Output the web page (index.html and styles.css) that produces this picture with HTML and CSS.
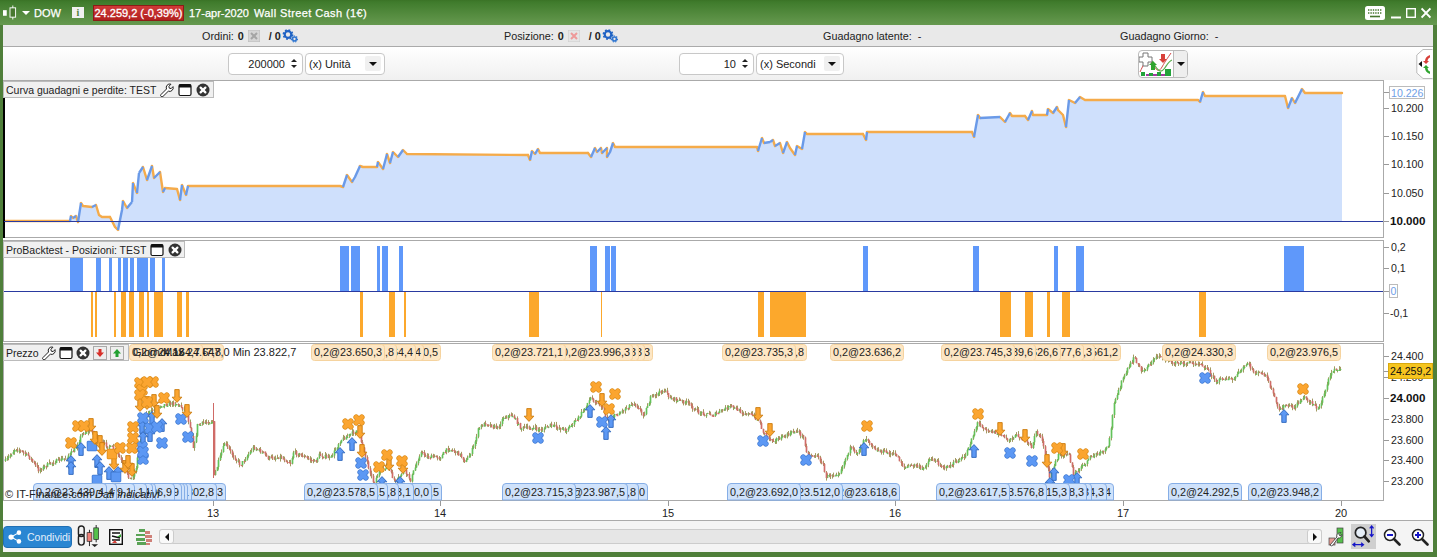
FILE: index.html
```html
<!DOCTYPE html>
<html lang="it">
<head>
<meta charset="utf-8">
<title>DOW - Wall Street Cash</title>
<link rel="stylesheet" href="styles.css">
</head>
<body>
<svg class="defs" aria-hidden="true">
  <defs>
    <symbol id="i-wrench" viewBox="0 0 14 14"><path d="M1 11.500 6.500 6a3.600 3.600 0 0 1 .6-3.800A3.600 3.600 0 0 1 11 1.200L8.900 3.300l.4 1.900 1.900.4L13 3.600a3.600 3.600 0 0 1-1 3.900 3.600 3.600 0 0 1-3.700.7L3 13.400A1.300 1.300 0 0 1 1 11.500Z" fill="#fff" stroke="#222" stroke-width="1"/></symbol>
    <symbol id="i-window" viewBox="0 0 14 14"><rect x="1" y="1.500" width="12" height="11" rx="1.500" fill="#fff" stroke="#111" stroke-width="1.200"/><rect x="1" y="1.500" width="12" height="3" fill="#111"/></symbol>
    <symbol id="i-close" viewBox="0 0 14 14"><circle cx="7" cy="7" r="6.500" fill="#333"/><path d="M4.600 4.600l4.800 4.800M9.400 4.600 4.600 9.400" stroke="#fff" stroke-width="2.200" stroke-linecap="round"/></symbol>
    <symbol id="i-gears" viewBox="0 0 16 14"><circle cx="6" cy="5.500" r="3.300" fill="none" stroke="#1f63c4" stroke-width="2.200"/><circle cx="6" cy="5.500" r="4.600" fill="none" stroke="#1f63c4" stroke-width="1.600" stroke-dasharray="1.800 1.800"/><circle cx="12.500" cy="10" r="1.900" fill="none" stroke="#2f75d0" stroke-width="1.500"/><circle cx="12.500" cy="10" r="3" fill="none" stroke="#2f75d0" stroke-width="1.100" stroke-dasharray="1.300 1.300"/></symbol>
    <symbol id="m-ox" viewBox="0 0 12 12"><path d="M3.200 3.200l5.600 5.600M8.800 3.200 3.200 8.800" fill="none" stroke="#d98a18" stroke-width="5.600" stroke-linecap="round"/><path d="M3.200 3.200l5.600 5.600M8.800 3.200 3.200 8.800" fill="none" stroke="#fba530" stroke-width="4.400" stroke-linecap="round"/></symbol>
    <symbol id="m-bx" viewBox="0 0 12 12"><path d="M3.200 3.200l5.600 5.600M8.800 3.200 3.200 8.800" fill="none" stroke="#3f78cf" stroke-width="5.600" stroke-linecap="round"/><path d="M3.200 3.200l5.600 5.600M8.800 3.200 3.200 8.800" fill="none" stroke="#5c98f4" stroke-width="4.400" stroke-linecap="round"/></symbol>
    <symbol id="m-od" viewBox="0 0 11 14"><path d="M3.300.6h4.400v7.600h2.700L5.500 13.400.6 8.200h2.700Z" fill="#fba530" stroke="#c97c10" stroke-width=".9"/></symbol>
    <symbol id="m-bu" viewBox="0 0 11 14"><path d="M3.300 13.400h4.400V5.800h2.700L5.500.6.6 5.800h2.700Z" fill="#5c98f4" stroke="#2f66bb" stroke-width=".9"/></symbol>
    <symbol id="m-bs" viewBox="0 0 11 11"><rect x=".5" y=".5" width="10" height="10" rx="1.200" fill="#5c98f4" stroke="#3f78cf"/></symbol>
    <symbol id="m-os" viewBox="0 0 11 11"><rect x=".5" y=".5" width="10" height="10" rx="1.200" fill="#fba530" stroke="#de8a14"/></symbol>
  </defs>
</svg>

<div class="app">
  <header class="titlebar">
    <svg class="ti-candle" viewBox="0 0 15 15"><rect x="0" y="5" width="4" height="6" fill="#fff"/><path d="M10.500 0v15" stroke="#fff"/><rect x="7.500" y="2.500" width="6" height="10" fill="#47782f" stroke="#fff"/></svg>
    <span class="ti-caret"></span>
    <span class="ti-sym">DOW</span>
    <span class="ti-info">i</span>
    <span class="ti-price">24.259,2 (-0,39%)</span>
    <span class="ti-text">17-apr-2020</span>
    <span class="ti-text ti-wide">Wall Street Cash (1€)</span>
    <span class="ti-right">
      <svg class="ti-kbd" viewBox="0 0 20 14"><rect width="20" height="14" rx="2.500" fill="#fff"/><path d="M3 4h14M3 7h14" stroke="#47782f" stroke-width="1.600" stroke-dasharray="1.400 1"/><path d="M5 10.500h10" stroke="#47782f" stroke-width="1.600"/></svg>
      <svg class="ti-win" viewBox="0 0 10 12"><path d="M0 10.500h10" stroke="#fff" stroke-width="2"/></svg>
      <svg class="ti-win" viewBox="0 0 10 12"><rect x=".7" y="1.700" width="8.600" height="8.600" fill="none" stroke="#fff" stroke-width="1.400"/></svg>
      <svg class="ti-win" viewBox="0 0 10 12"><path d="M.6 1.500l8.800 9M9.400 1.500l-8.800 9" stroke="#fff" stroke-width="1.800"/></svg>
    </span>
  </header>

  <div class="status">
    <div class="st-cell">Ordini: <b>0</b>
      <svg class="st-doc" viewBox="0 0 12 12"><rect width="12" height="12" fill="#d5d5d5" stroke="#bbb"/><path d="M3 3l6 6M9 3 3 9" stroke="#a5a5a5" stroke-width="2"/></svg>
      <b class="st-slash">/ 0</b><svg class="st-gear"><use href="#i-gears"/></svg></div>
    <div class="st-cell">Posizione: <b>0</b>
      <svg class="st-doc" viewBox="0 0 12 12"><rect width="12" height="12" fill="#e5e5e5" stroke="#ccc"/><path d="M3 3l6 6M9 3 3 9" stroke="#ee9a9a" stroke-width="2"/></svg>
      <b class="st-slash">/ 0</b><svg class="st-gear"><use href="#i-gears"/></svg></div>
    <div class="st-cell">Guadagno latente:&nbsp; -</div>
    <div class="st-cell">Guadagno Giorno:&nbsp; -</div>
  </div>

  <div class="controls">
    <div class="ctl-group">
      <div class="spin"><span class="spin-val">200000</span><span class="spin-arrows"><i class="up"></i><i class="down"></i></span></div>
      <div class="sel sel-a"><span>(x) Unità</span><span class="sel-btn"><i></i></span></div>
    </div>
    <div class="ctl-group ctl-second">
      <div class="spin"><span class="spin-val">10</span><span class="spin-arrows"><i class="up"></i><i class="down"></i></span></div>
      <div class="sel sel-b"><span>(x) Secondi</span><span class="sel-btn"><i></i></span></div>
    </div>
    <div class="ind-btn">
      <svg class="ind-ico" viewBox="0 0 34 26">
        <path d="M1 21C6 10 9 6 13 12s6 11 10 4 5-8 9-14" fill="none" stroke="#d24a4a" stroke-width="1"/>
        <path d="M3 11c5-7 8-5 12 2s7 9 10 5 5-8 8-9" fill="none" stroke="#5cae4e" stroke-width="1.200"/>
        <path d="M4 2h5v4h4v5H9v4H4v-4H0V6h4Z" fill="#fff" stroke="#777"/>
        <path d="M12 19v-5H10l4-4 4 4h-2v5Z" fill="#2fa52f"/>
        <path d="M22 3v5h-2l4 4 4-4h-2V3Z" fill="#d8403a"/>
        <path d="M2 25v-4h4v4Zm8 0v-3h4v3Zm8 0v-4h4v4Zm8-7h6v7h-6Z" fill="#23a23a"/>
        <path d="M7 25v-2h3v2Zm7 0v-2h4v2Zm8 0v-2h4v2Z" fill="#a23aa2"/>
      </svg>
      <span class="ind-caret"><i></i></span>
    </div>
    <div class="side-tab">
      <svg viewBox="0 0 17 30"><path d="M16.500.5H7L.8 6v18L7 29.500h9.500" fill="#fff" stroke="#bbb"/><path d="M2.500 15 6 12v6Z" fill="#111"/><path d="M14 6c-3 1-5 3-5 6H7l3 3 3-3h-1.500c0-1.500 1-3 2.500-3.500Z" fill="#d8403a"/><path d="M14 25c-3-1-5-3-5-6H7l3-3 3 3h-1.500c0 1.500 1 3 2.500 3.500Z" fill="#2fa52f"/></svg>
    </div>
  </div>

  <section class="panel panel-pnl">
    <div class="plot"></div>
    <svg class="canvas" viewBox="3 80 1430 158">
      <g id="pnl-area"></g>
      <rect class="black-bar" x="3" y="98" width="2" height="140"/>
      <path class="zero" d="M4 221.500H1383"/>
      <path class="tick" d="M1384 92.500h5M1384 108.500h5M1384 136.500h5M1384 164.500h5M1384 193.500h5M1384 221.500h5"/>
      <text class="ax" x="1391" y="112">10.200</text>
      <text class="ax" x="1391" y="140">10.150</text>
      <text class="ax" x="1391" y="168">10.100</text>
      <text class="ax" x="1391" y="197">10.050</text>
      <text class="ax ax-b" x="1390" y="225">10.000</text>
      <rect class="ax-box" x="1389.500" y="86.500" width="35" height="12"/>
      <text class="ax ax-blue" x="1391" y="97">10.226</text>
    </svg>
    <div class="chip chip-pnl">Curva guadagni e perdite: TEST
      <svg class="chip-i"><use href="#i-wrench"/></svg><svg class="chip-i"><use href="#i-window"/></svg><svg class="chip-i"><use href="#i-close"/></svg></div>
  </section>

  <section class="panel panel-pos">
    <div class="plot"></div>
    <svg class="canvas" viewBox="3 240 1430 102">
      <g id="pos-bars"></g>
      <path class="zero" d="M4 291.500H1383"/>
      <path class="tick" d="M1384 247.500h5M1384 268.500h5M1384 291.500h5M1384 313.500h5"/>
      <text class="ax" x="1391" y="251">0,2</text>
      <text class="ax" x="1391" y="272">0,1</text>
      <rect class="ax-box" x="1389.500" y="284.500" width="8" height="13"/>
      <text class="ax ax-blue" x="1390.500" y="295">0</text>
      <text class="ax" x="1390" y="317">-0,1</text>
    </svg>
    <div class="chip chip-pos">ProBacktest - Posizioni: TEST
      <svg class="chip-i"><use href="#i-window"/></svg><svg class="chip-i"><use href="#i-close"/></svg></div>
  </section>

  <section class="panel panel-price">
    <div class="plot"></div>
    <svg class="canvas" viewBox="3 343 1430 158">
      <g id="price-candles"></g>
      <g id="price-marks"></g>
      <g id="price-bubbles"></g>
      <text class="ov" x="133" y="356">Giorno: 13</text>
      <text class="ov" x="163" y="356">Max 24.647,0 Min 23.822,7</text>
      <text class="ov" x="5" y="498">© IT-Finance.com</text>
      <text class="ov ov-i" x="95" y="498">Dati indicativi</text>
      <path class="tick" d="M1384 356.500h5M1384 377.500h5M1384 398.500h5M1384 419.500h5M1384 440.500h5M1384 460.500h5M1384 481.500h5M1384 371.500h5"/>
      <text class="ax" x="1391" y="360">24.400</text>
      <text class="ax" x="1391" y="381">24.200</text>
      <text class="ax ax-b" x="1390" y="402">24.000</text>
      <text class="ax" x="1391" y="423">23.800</text>
      <text class="ax" x="1391" y="444">23.600</text>
      <text class="ax" x="1391" y="464">23.400</text>
      <text class="ax" x="1391" y="485">23.200</text>
      <rect class="last-box" x="1388.500" y="363.500" width="44" height="15"/>
      <text class="ax last-t" x="1390" y="375">24.259,2</text>
    </svg>
    <div class="chip chip-price">Prezzo
      <svg class="chip-i"><use href="#i-wrench"/></svg><svg class="chip-i"><use href="#i-window"/></svg><svg class="chip-i"><use href="#i-close"/></svg>
      <svg class="chip-b" viewBox="0 0 14 14"><rect x=".5" y=".5" width="13" height="13" fill="#eee" stroke="#aaa"/><path d="M7 11 3 6.500h2.500V3h3v3.500H11Z" fill="#d8302a"/></svg>
      <svg class="chip-b" viewBox="0 0 14 14"><rect x=".5" y=".5" width="13" height="13" fill="#eee" stroke="#aaa"/><path d="M7 3l4 4.500H8.500V11h-3V7.500H3Z" fill="#22a032"/></svg>
    </div>
  </section>

  <div class="xaxis">
    <span class="x-tick x13">13</span><span class="x-tick x14">14</span><span class="x-tick x15">15</span><span class="x-tick x16">16</span><span class="x-tick x17">17</span><span class="x-tick x20">20</span>
  </div>

  <footer class="toolbar">
    <button class="share">
      <svg viewBox="0 0 16 16"><circle cx="3.500" cy="8" r="3" fill="#fff"/><circle cx="12.500" cy="3" r="2.600" fill="#fff"/><circle cx="12.500" cy="13" r="2.600" fill="#fff"/><path d="M3.500 8l9-5M3.500 8l9 5" stroke="#fff" stroke-width="1.300"/></svg>
      Condividi
    </button>
    <svg class="tb-link" viewBox="0 0 24 24">
      <rect x="1.500" y="1" width="6" height="11" rx="3" fill="none" stroke="#222" stroke-width="1.500"/><rect x="1.500" y="10" width="6" height="11" rx="3" fill="none" stroke="#222" stroke-width="1.500"/>
      <path d="M20 0v18" stroke="#222"/><rect x="17.500" y="3" width="5" height="12" fill="#56c04c" stroke="#222" stroke-width=".7"/>
      <path d="M13 5v17" stroke="#222"/><rect x="10.500" y="8" width="5" height="9" fill="#ee8078" stroke="#222" stroke-width=".7"/><path d="M15 20h7l-3.500 3Z" fill="#222"/>
    </svg>
    <svg class="tb-doc" viewBox="0 0 14 16"><rect x=".7" y=".7" width="12.600" height="14.600" fill="#fff" stroke="#111" stroke-width="1.400"/><path d="M3 4h8M3 7l8 2M3 11h8" stroke="#111" stroke-width="1.300"/><path d="M3 14l3-3 2 3Z" fill="#d8403a"/><path d="M8 8l4-3v3Z" fill="#2fa52f"/></svg>
    <svg class="tb-brick" viewBox="0 0 16 16"><path d="M0 5h9v2H0Zm0 4h9v3H0Zm1 4h9v3H1ZM3 0h6v3H3Z" fill="#5aa356"/><path d="M9 2h5v3H9Zm0 4h7v3H9Zm1 4h6v3h-6Zm0 4h4v2h-4Z" fill="#cf8078"/></svg>
    <div class="scroll">
      <span class="sc-btn"><i class="sc-l"></i></span>
      <span class="sc-track"></span>
      <span class="sc-btn"><i class="sc-r"></i></span>
    </div>
    <svg class="tb-wrench" viewBox="0 0 16 20"><rect x="1" y="11" width="6" height="7" fill="#e89a92" stroke="#444" stroke-width=".7"/><rect x="9" y="1" width="6" height="15" fill="#56c04c" stroke="#444" stroke-width=".7"/><path d="M2 18 9 10a3 3 0 0 1 2-4l2-.5-2 2 1 1.500 2-1.500a3.500 3.500 0 0 1-4 3.500L5 18a2 2 0 0 1-3 0Z" fill="#fff" stroke="#333" stroke-width=".8"/></svg>
    <span class="tb-zoom-on">
      <svg viewBox="0 0 24 24"><circle cx="9" cy="8" r="5.500" fill="#e6eef7" stroke="#222" stroke-width="1.800"/><path d="M13 12l4.500 5" stroke="#222" stroke-width="2.800" stroke-linecap="round"/><path d="M20.500 1v11M18.500 3.500l2-2.500 2 2.500M18.500 9.500l2 2.500 2-2.500M1 20.500h11M3.500 18.500 1 20.500l2.500 2M9.500 18.500l2.500 2-2.500 2" fill="none" stroke="#1616c8" stroke-width="1.300"/></svg>
    </span>
    <svg class="tb-zoom" viewBox="0 0 18 18"><circle cx="7" cy="7" r="5.500" fill="#fff" stroke="#222" stroke-width="1.500"/><path d="M4 7h6" stroke="#1616c8" stroke-width="2"/><path d="M11 11l5.500 5.500" stroke="#222" stroke-width="2.600" stroke-linecap="round"/></svg>
    <svg class="tb-zoom tb-zoom-plus" viewBox="0 0 18 18"><circle cx="7" cy="7" r="5.500" fill="#fff" stroke="#222" stroke-width="1.500"/><path d="M4 7h6M7 4v6" stroke="#1616c8" stroke-width="2"/><path d="M11 11l5.500 5.500" stroke="#222" stroke-width="2.600" stroke-linecap="round"/></svg>
  </footer>
</div>
<script src="chart.js"></script>
</body>
</html>
```
FILE: styles.css
```css
* { box-sizing: border-box; }
html, body { margin: 0; padding: 0; background: #fff; }
body { font: 11px "Liberation Sans", Arial, sans-serif; color: #222; overflow: hidden; }
.defs { position: absolute; width: 0; height: 0; }

.app { width: 1437px; height: 557px; display: flex; flex-direction: column; background: #fff;
  border-left: 3px solid #4f7f3a; border-right: 4px solid #4f7f3a; border-bottom: 5px solid #4f7f3a; }

/* title bar */
.titlebar { height: 25px; margin-left: -3px; margin-right: -4px; flex: none; display: flex; align-items: center; color: #fff;
  background: linear-gradient(#3a7326 0, #3f7b2c 2px, #66994f 100%); padding-left: 3px; }
.ti-candle { width: 14px; height: 15px; flex: none; }
.ti-caret { width: 0; height: 0; margin-left: 5px; border: 4px solid transparent; border-top: 4px solid #fff; border-bottom: 0; }
.ti-sym { margin-left: 4px; width: 38px; -webkit-text-stroke: .25px #fff; }
.ti-info { width: 12px; height: 11px; background: #f0f0f0; color: #4f7f3a; font: bold 10px/11px "Liberation Serif", serif; text-align: center; }
.ti-price { margin-left: 9px; width: 91px; height: 16px; line-height: 14px; text-align: center; white-space: nowrap;
  background: linear-gradient(#cf3a38, #b3201f); border: 1px solid #8c1d16; font-size: 11px; -webkit-text-stroke: .3px #fff; }
.ti-text { margin-left: 5px; -webkit-text-stroke: .25px #fff; white-space: nowrap; }
.ti-wide { letter-spacing: .4px; }
.ti-right { margin-left: auto; display: flex; align-items: center; gap: 5px; padding-right: 6px; }
.ti-kbd { width: 20px; height: 14px; margin-right: 1px; }
.ti-win { width: 10px; height: 12px; }

/* status row */
.status { height: 22px; flex: none; display: grid; grid-template-columns: 302px 319px 297px 1fr; padding-left: 199px; font-size: 10.8px;
  align-items: center; background: #e9e9e9; border-bottom: 1px solid #aaa; white-space: nowrap; }
.st-cell { display: flex; align-items: center; gap: 4px; white-space: nowrap; }
.st-doc { width: 12px; height: 12px; }
.st-slash { margin-left: 5px; margin-right: -1px; }
.st-gear { width: 16px; height: 14px; margin-left: -2px; }

/* controls row */
.controls { height: 33px; flex: none; display: flex; align-items: center; padding-left: 225px;
  background: linear-gradient(#fff, #f0f0f0); }
.ctl-group { display: flex; gap: 2px; height: 22px; }
.ctl-second { margin-left: 294px; }
.spin { width: 75px; display: flex; justify-content: flex-end; align-items: center; background: #fff; border: 1px solid #c8c8c8; border-radius: 4px; padding-right: 2px; }
.spin-val { margin-right: 3px; }
.spin-arrows { width: 12px; display: flex; flex-direction: column; align-items: center; gap: 3px; }
.spin-arrows i { width: 0; height: 0; border: 3px solid transparent; border-top: 0; border-bottom: 3px solid #222; }
.spin-arrows i.down { border-top: 3px solid #222; border-bottom: 0; }
.sel { display: flex; justify-content: space-between; align-items: center; background: #fff; border: 1px solid #c8c8c8; border-radius: 4px; padding: 0 3px 0 3px; }
.sel-a { width: 80px; }
.sel-b { width: 88px; }
.sel-btn { width: 16px; height: 15px; display: flex; align-items: center; justify-content: center; background: #f0f0f0; border-radius: 2px; }
.sel-btn i, .ind-caret i { width: 0; height: 0; border: 4px solid transparent; border-top: 4px solid #111; border-bottom: 0; }
.ind-btn { margin-left: 294px; width: 50px; height: 28px; display: flex; background: #fff; border: 1px solid #bbb; border-radius: 4px; }
.ind-ico { width: 34px; height: 26px; flex: none; }
.ind-caret { flex: 1; display: flex; align-items: center; justify-content: center; background: #eee; border-left: 1px solid #bbb; border-radius: 0 3px 3px 0; }
.side-tab { margin-left: auto; width: 17px; height: 30px; }
.side-tab svg { width: 17px; height: 30px; display: block; }

/* panels */
.panel { position: relative; flex: none; display: flex; }
.panel-pnl { height: 158px; margin-bottom: 2px; }
.panel-pos { height: 102px; margin-bottom: 1px; }
.panel-price { height: 158px; }
.plot { width: 1381px; border: 1px solid #aaa; background: #fff; }
.canvas { position: absolute; left: 0; top: 0; width: 100%; height: 100%; display: block; }
.chip { position: absolute; left: 0; top: 1px; height: 17px; display: flex; align-items: center; gap: 3px; padding-left: 2px; white-space: nowrap; font-size: 10.5px;
  background: #f0f0f0; border: 1px solid #bbb; }
.chip-pnl { width: 211px; gap: 4px; }
.chip-pos { width: 182px; gap: 4px; }
.chip-price { width: 126px; }
.chip-i { width: 14px; height: 14px; flex: none; }
.chip-b { width: 14px; height: 14px; flex: none; }

/* svg chart styling */
.ax { font: 10.6px "Liberation Sans", Arial, sans-serif; fill: #222; }
.ax-b { font-size: 11.600px; font-weight: bold; fill: #111; }
.ax-blue { fill: #6f9ee6; }
.ax-box { fill: #fff; stroke: #bbb; }
.last-box { fill: #f6c51f; stroke: #d9a90e; }
.last-t { fill: #111; }
.tick { stroke: #999; fill: none; }
.zero { stroke: #2a3aa0; stroke-width: 1; fill: none; }
.black-bar { fill: #000; }
.area { fill: #cfe0fc; }
.up { stroke: #6a9ae8; stroke-width: 2.400; fill: none; stroke-linejoin: round; }
.dn { stroke: #f5ab4a; stroke-width: 2.400; fill: none; stroke-linecap: round; }
.bar-b { fill: #5f98fa; }
.bar-o { fill: #fca82c; }
.c-wick { stroke: #a39a62; stroke-width: 1; fill: none; }
.c-up { stroke: #62c25a; stroke-width: 1.700; fill: none; }
.c-dn { stroke: #d06c68; stroke-width: 1.700; fill: none; }
.b-o { fill: #fde6c4; stroke: #f5d39f; }
.b-b { fill: #cfe2fb; stroke: #86aee6; }
.b-t { font: 10.800px "Liberation Sans", Arial, sans-serif; fill: #222; }
.ov { font: 11px "Liberation Sans", Arial, sans-serif; fill: #222; }
.ov-i { font-style: italic; }

/* x axis */
.xaxis { height: 20px; flex: none; position: relative; background: #fff; border-bottom: 1px solid #aaa; }
.x-tick { position: absolute; top: 0; width: 30px; margin-left: -15px; padding-top: 6px; text-align: center; line-height: 13px; font-size: 11px; }
.x-tick::before { content: ""; position: absolute; left: 15px; top: 0; width: 1px; height: 5px; background: #999; }
.x13 { left: 210px; } .x14 { left: 437px; } .x15 { left: 665px; } .x16 { left: 892px; } .x17 { left: 1120px; } .x20 { left: 1338px; }

/* toolbar */
.toolbar { flex: 1; display: flex; align-items: center; background: #f4f4f4; padding-left: 0; }
.share { width: 69px; height: 22px; padding: 0 0 0 4px; display: flex; align-items: center; gap: 5px; color: #e4f0fb; font: 10.500px "Liberation Sans", Arial, sans-serif; background: #2a86d2; border: 1px solid #1f6fb4; border-radius: 4px; white-space: nowrap; }
.share svg { width: 14px; height: 14px; flex: none; }
.tb-link { width: 23px; height: 23px; margin-left: 5px; flex: none; }
.tb-doc { width: 14px; height: 16px; margin-left: 9px; flex: none; }
.tb-brick { width: 16px; height: 16px; margin-left: 13px; flex: none; }
.scroll { margin-left: 7px; width: 1163px; height: 15px; display: flex; background: #e6e6e6; border: 1px solid #ccc; border-radius: 3px; flex: none; }
.sc-track { flex: 1; }
.sc-btn { width: 15px; display: flex; align-items: center; justify-content: center; background: #f9f9f9; border-radius: 3px; border: 1px solid #ccc; margin: -1px; }
.sc-btn i { width: 0; height: 0; border: 4px solid transparent; }
.sc-l { border-left: 0 !important; border-right: 4px solid #111 !important; }
.sc-r { border-right: 0 !important; border-left: 4px solid #111 !important; }
.tb-wrench { width: 16px; height: 20px; margin-left: 6px; flex: none; }
.tb-zoom-on { width: 25px; height: 25px; margin-left: 7px; flex: none; background: #cfcfcf; display: flex; align-items: center; justify-content: center; }
.tb-zoom-on svg { width: 23px; height: 23px; }
.tb-zoom { width: 18px; height: 18px; margin-left: 7px; flex: none; }
.tb-zoom-plus { margin-left: 10px; }
```
FILE: chart.js
```js
// Draws the data-driven parts of the three chart panels: equity curve, position bars, candles, markers, bubbles.
(function () {
  var pnl = [[5,221],[70,221],[71,216],[73,218],[76,216],[78,222],[81,203],[83,206],[92,207],[96,205],[99,215],[102,217],[110,217],[115,227],[118,230],[122,210],[123,201],[127,208],[132,202],[133,183],[137,193],[139,173],[143,167],[147,180],[152,166],[154,178],[160,172],[163,192],[165,188],[177,189],[180,200],[182,185],[186,195],[188,186],[340,186],[343,187],[347,175],[352,182],[355,177],[360,166],[363,167],[377,167],[378,162],[383,169],[387,154],[390,163],[393,152],[398,157],[403,150],[407,154],[528,155],[530,160],[532,151],[535,154],[538,149],[540,153],[588,153],[591,157],[595,148],[597,152],[601,148],[602,153],[607,148],[607,157],[610,152],[613,143],[615,147],[757,147],[758,151],[762,138],[764,143],[770,142],[773,140],[775,146],[780,143],[783,153],[787,142],[790,148],[795,155],[797,146],[802,149],[805,132],[807,134],[863,134],[866,140],[867,132],[972,132],[974,137],[978,115],[980,118],[1000,117],[1005,122],[1010,113],[1012,116],[1025,116],[1028,120],[1032,111],[1033,115],[1047,115],[1048,109],[1053,113],[1057,107],[1058,110],[1063,115],[1066,127],[1069,100],[1075,103],[1080,97],[1085,100],[1198,100],[1200,102],[1203,92],[1205,96],[1285,96],[1288,108],[1292,98],[1295,103],[1302,89],[1305,93],[1342,93]];

  var price = [[5,461],[15,448],[28,456],[38,470],[50,463],[65,458],[74,450],[82,433],[90,430],[100,442],[115,450],[125,470],[130,480],[135,470],[140,440],[145,415],[160,405],[175,403],[185,410],[190,428],[193,450],[197,425],[205,422],[212,421],[213,403],[213,478],[217,465],[224,443],[232,455],[240,465],[253,447],[263,453],[267,458],[280,457],[290,463],[293,452],[315,462],[318,455],[330,458],[340,440],[357,430],[363,450],[368,467],[373,483],[378,473],[387,465],[390,473],[395,483],[403,470],[410,480],[420,452],[427,457],[440,457],[448,448],[460,455],[465,462],[473,447],[478,428],[485,423],[497,428],[503,417],[512,415],[520,428],[533,428],[540,430],[550,425],[565,430],[578,418],[590,398],[600,405],[607,420],[620,412],[633,402],[643,415],[650,398],[663,390],[670,398],[687,403],[697,412],[713,415],[730,406],[741,412],[751,415],[758,420],[763,433],[771,440],[781,438],[796,430],[803,438],[807,455],[815,455],[822,463],[825,477],[839,472],[850,447],[855,455],[865,437],[876,450],[896,455],[903,467],[916,465],[921,470],[930,458],[945,468],[964,457],[977,423],[987,430],[1001,435],[1007,440],[1017,435],[1031,447],[1035,432],[1041,437],[1046,463],[1049,477],[1058,455],[1068,452],[1073,475],[1083,465],[1092,455],[1100,453],[1108,447],[1114,400],[1123,377],[1134,357],[1141,372],[1158,355],[1173,363],[1200,363],[1207,370],[1217,383],[1220,377],[1232,380],[1247,363],[1253,372],[1265,375],[1272,393],[1278,410],[1285,405],[1293,408],[1303,397],[1312,403],[1318,410],[1328,380],[1330,372],[1335,368],[1341,370]];

  var blue = [[70,83],[96,101],[109,112],[118,121],[123,128],[130,134],[137,148],[150,155],[162,165],[340,349],[351,360],[377,380],[382,388],[399,403],[590,597],[605,610],[611,616],[863,868],[973,979],[1054,1058],[1076,1084],[1284,1304]];
  var orange = [[91,93],[95,97],[114,116],[121,126],[129,134],[139,144],[147,149],[154,163],[177,182],[186,189],[360,363],[389,395],[404,406],[529,539],[601,602],[758,764],[770,806],[1000,1011],[1025,1033],[1047,1050],[1062,1070],[1199,1206]];

  var marks = {
    bu: [[71,462],[71,468],[81,449],[97,461],[100,468],[109,473],[118,473],[142,427],[152,418],[162,425],[150,435],[143,438],[340,454],[352,444],[382,483],[400,483],[590,411],[611,421],[606,433],[864,449],[974,451],[1054,474],[1077,479],[1050,484],[1284,416]],
    bs: [[92,446],[97,480],[116,477]],
    bx: [[181,419],[188,437],[162,443],[143,459],[142,447],[143,452],[150,428],[157,427],[143,418],[361,463],[363,475],[538,438],[602,422],[763,441],[806,460],[1010,453],[1032,461],[1069,480],[1205,378]],
    ox: [[71,443],[78,426],[84,426],[133,427],[120,448],[132,448],[133,438],[140,383],[142,390],[153,382],[147,382],[140,395],[164,398],[147,402],[348,424],[359,420],[379,467],[387,455],[402,461],[596,387],[615,394],[609,409],[867,426],[978,414],[1057,448],[1083,454],[1303,389]],
    od: [[91,425],[95,438],[100,442],[102,449],[140,405],[147,403],[154,401],[157,412],[177,396],[187,411],[114,463],[125,467],[132,470],[128,462],[360,432],[362,451],[389,464],[403,467],[529,415],[602,400],[758,414],[770,430],[1000,429],[1025,436],[1047,461],[1063,450]],
    os: [[112,454]]
  };
  var sizes = { bu: [11,14], od: [11,14], bx: [12,12], ox: [12,12], bs: [11,11], os: [11,11] };

  var topBubbles = [[203,"0,2@24.164,7"],[224,"0,2@24.647,8"],
    [385,"0,2@23.650,3"],[397,"0,2@23.672,8"],[416,"0,2@23.664,4"],[424,"0,2@23.584,4"],[441,"0,2@23.610,5"],
    [566,"0,2@23.721,1"],[633,"0,2@23.996,3"],[639,"0,2@24.010,3"],[645,"0,2@23.973,3"],[653,"0,2@23.981,3"],
    [796,"0,2@23.735,3"],[807,"0,2@23.701,8"],
    [904,"0,2@23.636,2"],
    [1015,"0,2@23.745,3"],[1036,"0,2@23.639,6"],[1061,"0,2@23.626,6"],[1084,"0,2@23.577,6"],[1095,"0,2@23.493,3"],[1121,"0,2@23.561,2"],
    [1236,"0,2@24.330,3"],[1341,"0,2@23.976,5"]];
  var botBubbles = [[107,"0,2@23.439,4"],[117,"0,2@23.504,4"],[135,"0,2@23.559,1"],[147,"0,2@23.654,1"],[153,"0,2@23.610,4"],[156,"0,2@23.622,1"],[175,"0,2@23.706,9"],[182,"0,2@23.711,9"],[185,"0,2@23.720,1"],[188,"0,2@23.730,1"],[192,"0,2@23.800,1"],[217,"0,2@23.802,8"],[226,"0,2@23.790,3"],
    [378,"0,2@23.578,5"],[388,"0,2@23.520,5"],[399,"0,2@23.408,8"],[414,"0,2@23.373,1"],[432,"0,2@23.360,0"],[442,"0,2@23.411,5"],
    [576,"0,2@23.715,3"],[628,"0,2@23.987,5"],[639,"0,2@23.904,8"],[648,"0,2@23.912,0"],
    [801,"0,2@23.692,0"],[843,"0,2@23.512,0"],[900,"0,2@23.618,6"],
    [1010,"0,2@23.617,5"],[1047,"0,2@23.576,8"],[1070,"0,2@23.415,3"],[1087,"0,2@23.408,3"],[1092,"0,2@23.400,3"],[1107,"0,2@23.424,3"],[1114,"0,2@23.404,4"],
    [1242,"0,2@24.292,5"],[1322,"0,2@23.948,2"]];

  // equity curve
  var areaPts = pnl.map(function (p) { return p.join(","); }).join(" ");
  var html = '<polygon class="area" points="5,221 ' + areaPts + ' 1342,221"/>';
  var up = "", dn = "";
  for (var i = 1; i < pnl.length; i++) {
    var seg = "M" + pnl[i - 1].join(" ") + "L" + pnl[i].join(" ");
    if (pnl[i][1] < pnl[i - 1][1] || pnl[i][0] < 70) up += seg; else dn += seg;
  }
  html += '<path class="dn" d="' + dn + '"/><path class="up" d="' + up + '"/>';
  document.getElementById("pnl-area").innerHTML = html;

  // position bars
  var bars = "";
  blue.forEach(function (b) { bars += '<rect class="bar-b" x="' + b[0] + '" y="246" width="' + (b[1] - b[0]) + '" height="45"/>'; });
  orange.forEach(function (b) { bars += '<rect class="bar-o" x="' + b[0] + '" y="292" width="' + (b[1] - b[0]) + '" height="45"/>'; });
  document.getElementById("pos-bars").innerHTML = bars;

  // candles: deterministic noise along the price path
  var seed = 7;
  function rnd() { seed = (seed * 16807) % 2147483647; return seed / 2147483647; }
  function yAt(x) {
    for (var k = 1; k < price.length; k++) {
      if (x <= price[k][0] && price[k][0] > price[k - 1][0]) {
        var a = price[k - 1], b = price[k];
        return a[1] + (b[1] - a[1]) * (x - a[0]) / (b[0] - a[0]);
      }
    }
    return price[price.length - 1][1];
  }
  var w = "", gu = "", rd = "", prev = yAt(5);
  for (var x = 5; x <= 1341; x += 1.5) {
    var cur = yAt(x) + (rnd() - 0.5) * 3.6;
    var hi = Math.min(cur, prev) - rnd() * 3, lo = Math.max(cur, prev) + rnd() * 3;
    var px = Math.round(x) + 0.5;
    w += "M" + px + " " + hi.toFixed(1) + "V" + lo.toFixed(1);
    var body = "M" + px + " " + prev.toFixed(1) + "V" + (Math.abs(cur - prev) < 1 ? prev + 1.2 : cur).toFixed(1);
    if (cur <= prev) gu += body; else rd += body;
    prev = cur;
  }
  document.getElementById("price-candles").innerHTML =
    '<path class="c-wick" d="' + w + '"/><path class="c-up" d="' + gu + '"/><path class="c-dn" d="' + rd + '"/>' +
    '<path class="c-spike" d="M213.500 403V478" stroke="#cf6a66" fill="none"/>';

  // markers
  var m = "";
  ["bu", "bs", "bx", "od", "os", "ox"].forEach(function (t) {
    var s = sizes[t];
    marks[t].forEach(function (p) {
      m += '<use href="#m-' + t + '" x="' + (p[0] - s[0] / 2) + '" y="' + (p[1] - s[1] / 2) + '" width="' + s[0] + '" height="' + s[1] + '"/>';
    });
  });
  document.getElementById("price-marks").innerHTML = m;

  // bubbles: earlier ones sit over later ones, so draw right to left
  var out = "";
  topBubbles.slice().reverse().forEach(function (b) {
    out += '<rect class="b-o" x="' + (b[0] - 74 + 0.5) + '" y="344.500" width="73" height="16" rx="3"/>' +
           '<text class="b-t" text-anchor="end" x="' + (b[0] - 3) + '" y="356">' + b[1] + '</text>';
  });
  botBubbles.slice().reverse().forEach(function (b) {
    var l = b[0] - 74 + 0.5, r = b[0] - 0.5;
    out += '<path class="b-b" d="M' + l + ' 500V487q0-3.500 3.500-3.500H' + (r - 3.5) + 'q3.500 0 3.500 3.500V500Z"/>' +
           '<text class="b-t" text-anchor="end" x="' + (b[0] - 3) + '" y="496">' + b[1] + '</text>';
  });
  document.getElementById("price-bubbles").innerHTML = out;
})();
```
